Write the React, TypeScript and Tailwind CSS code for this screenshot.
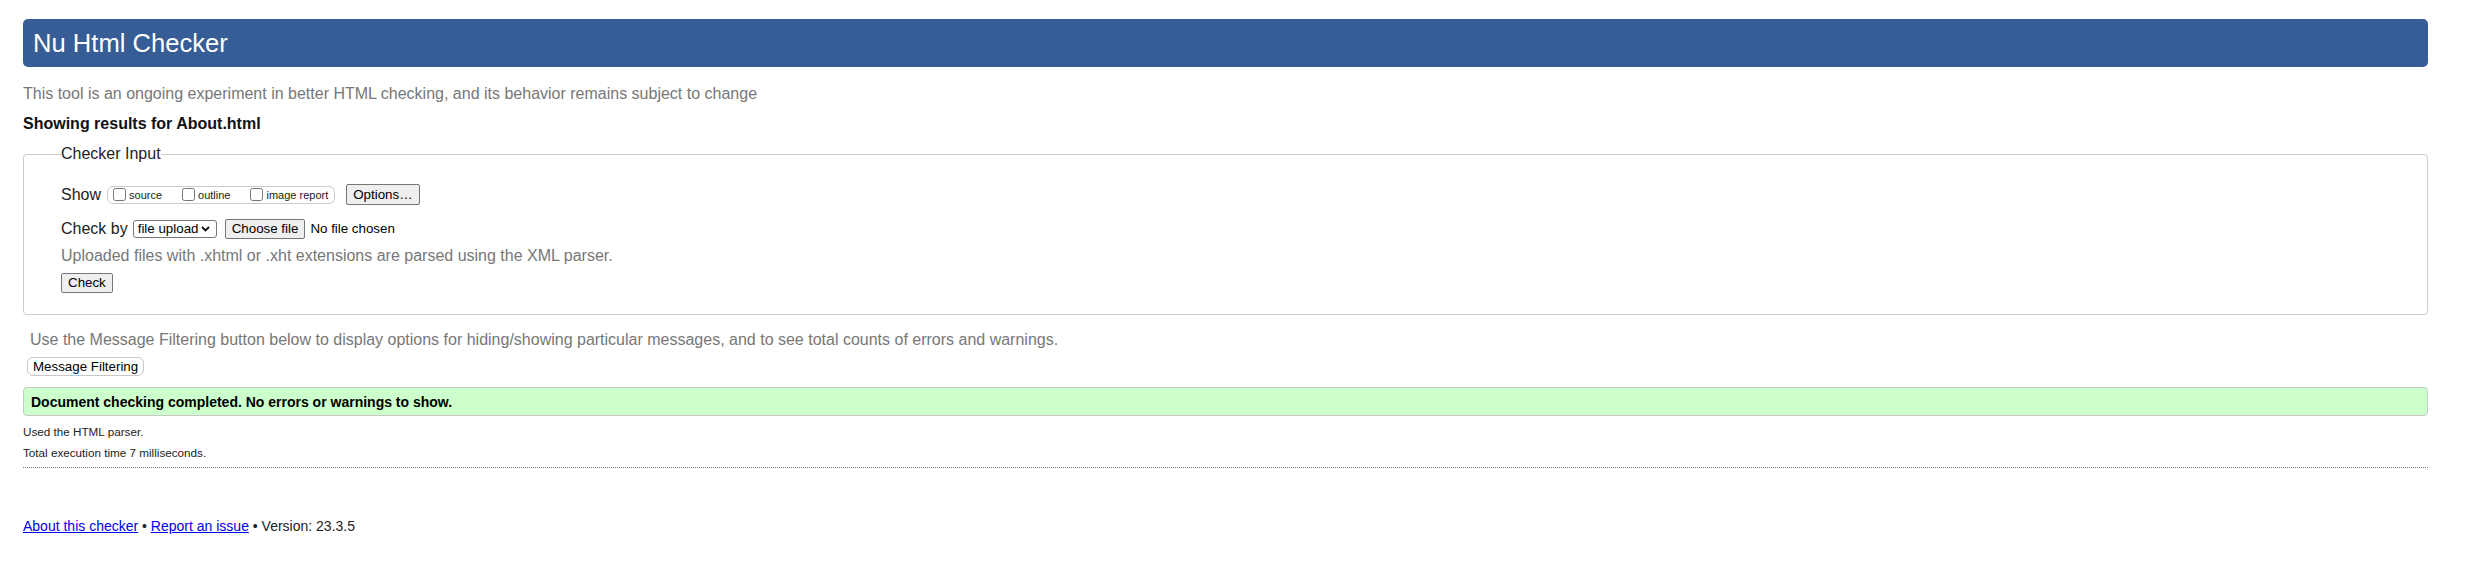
import React from "react";

function Chevron() {
  return (
    <svg width="9" height="6" viewBox="0 0 9 6" className="ml-auto mr-[6px]">
      <path d="M1 1 L4.5 4.5 L8 1" fill="none" stroke="#111" strokeWidth="1.8" />
    </svg>
  );
}

function Btn({ children, className = "" }: { children: React.ReactNode; className?: string }) {
  return (
    <button
      type="button"
      className={
        "inline-flex items-center border border-[#767676] bg-[#efefef] rounded-[2px] px-[6px] text-[13.33px] leading-[16px] text-black " +
        className
      }
    >
      {children}
    </button>
  );
}

export default function App() {
  return (
    <div className="min-h-[572px] bg-white pl-[23px] pr-[43px] pt-[19px] font-['Liberation_Sans',Arial,sans-serif] text-[#222]">
      <h1 className="h-[48px] rounded-[5px] bg-[#365d95] px-[10px] text-[25.6px] leading-[48px] font-normal text-white">
        Nu Html Checker
      </h1>
      <p className="mt-[18px] text-[16px] leading-[18px] text-[#777]">
        This tool is an ongoing experiment in better HTML checking, and its behavior remains subject to change
      </p>
      <p className="mt-[12px] text-[16px] leading-[18px] font-bold text-[#111]">Showing results for About.html</p>

      <fieldset className="mt-[12px] rounded-[4px] border border-[#ccc] pl-[37px] pr-[20px] pt-[21px] pb-[21px]">
        <legend className="p-0 text-[16px] leading-[18px] text-[#222]">Checker Input</legend>

        <div className="flex h-[21px] items-center">
          <span className="text-[16px] leading-[18px]">Show</span>
          <div className="ml-[6px] flex h-[18px] items-center gap-[20px] rounded-[6px] border border-[#ccc] bg-white pl-[5px] pr-[6px] text-[11px] leading-[13px]">
            <label className="flex items-center gap-[3px]">
              <input type="checkbox" className="m-0 mb-[1px] h-[13px] w-[13px]" />
              <span className="mt-[2px]">source</span>
            </label>
            <label className="flex items-center gap-[3px]">
              <input type="checkbox" className="m-0 mb-[1px] h-[13px] w-[13px]" />
              <span className="mt-[2px]">outline</span>
            </label>
            <label className="flex items-center gap-[3px]">
              <input type="checkbox" className="m-0 mb-[1px] h-[13px] w-[13px]" />
              <span className="mt-[2px]">image report</span>
            </label>
          </div>
          <Btn className="ml-[11px] h-[21px]">Options…</Btn>
        </div>

        <div className="mt-[13px] flex h-[21px] items-center">
          <span className="text-[16px] leading-[18px]">Check by</span>
          <div className="ml-[5px] flex h-[18px] w-[84px] items-center rounded-[3px] border border-[#767676] bg-white pl-[4px] text-[13.33px] leading-[16px] text-black">
            <span>file upload</span>
            <Chevron />
          </div>
          <Btn className="ml-[8px] h-[20px]">Choose file</Btn>
          <span className="ml-[5px] text-[13.33px] leading-[16px] text-black">No file chosen</span>
        </div>

        <p className="mt-[8px] text-[16px] leading-[18px] text-[#777]">
          Uploaded files with .xhtml or .xht extensions are parsed using the XML parser.
        </p>

        <div className="mt-[8px] flex">
          <Btn className="h-[20px]">Check</Btn>
        </div>
      </fieldset>

      <p className="mt-[16px] pl-[7px] text-[16px] leading-[18px] text-[#777]">
        Use the Message Filtering button below to display options for hiding/showing particular messages, and to see total counts of errors and warnings.
      </p>
      <div className="mt-[8px] flex">
        <button
          type="button"
          className="ml-[4px] flex h-[19px] items-center rounded-[6px] border border-[#c8c8c8] bg-white px-[5px] text-[13.33px] leading-[16px] text-black"
        >
          Message Filtering
        </button>
      </div>

      <div className="mt-[11px] rounded-[4px] border border-[#c8c8c8] bg-[#ccffcc] pl-[7px] pt-[7px] pb-[5px] text-[14px] leading-[15px] font-bold text-black">
        Document checking completed. No errors or warnings to show.
      </div>

      <p className="mt-[9px] text-[11.7px] leading-[13px] text-[#222]">Used the HTML parser.</p>
      <p className="mt-[8px] text-[11.7px] leading-[13px] text-[#222]">Total execution time 7 milliseconds.</p>

      <div className="mt-[8px] border-t border-dotted border-[#777]" />

      <p className="mt-[50px] text-[14px] leading-[16px] text-[#222]">
        <a href="#" className="text-[#0000ee] underline">About this checker</a>
        {" • "}
        <a href="#" className="text-[#0000ee] underline">Report an issue</a>
        {" • Version: 23.3.5"}
      </p>
    </div>
  );
}
